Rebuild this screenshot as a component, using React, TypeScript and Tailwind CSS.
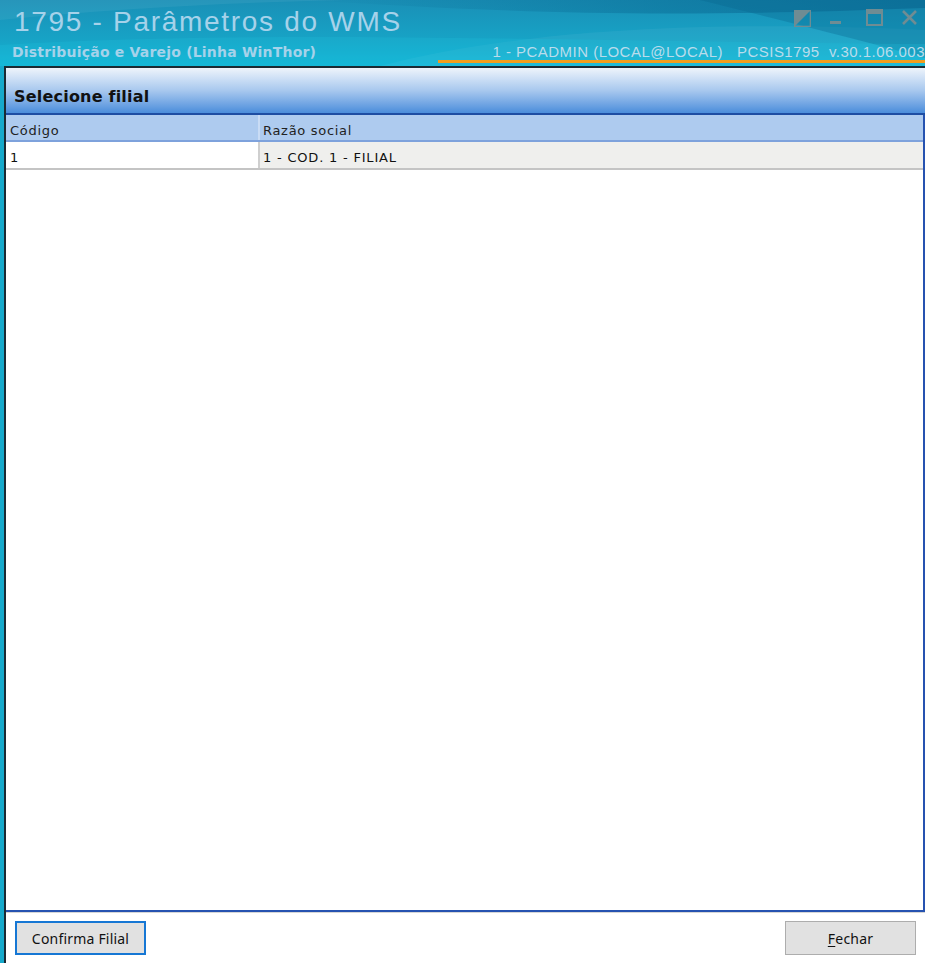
import React from "react";

const sans = { fontFamily: '"Liberation Sans", Arial, sans-serif' };
const tahoma = { fontFamily: '"DejaVu Sans", Verdana, sans-serif' };
const segoe = { fontFamily: '"Noto Sans", "Open Sans", sans-serif' };

function HeaderArt() {
  return (
    <svg className="absolute inset-0 h-full w-full" viewBox="0 0 925 66" preserveAspectRatio="none">
      <defs>
        <linearGradient id="hdrBase" x1="0" y1="0" x2="0" y2="1">
          <stop offset="0" stopColor="#1a8fb6" />
          <stop offset="0.6" stopColor="#17a3c6" />
          <stop offset="1" stopColor="#12b6d6" />
        </linearGradient>
        <linearGradient id="hdrDark" x1="0" y1="0" x2="1" y2="0">
          <stop offset="0" stopColor="#0b6f98" stopOpacity="0" />
          <stop offset="0.6" stopColor="#0b6f98" stopOpacity="0.55" />
          <stop offset="1" stopColor="#0a6a94" stopOpacity="0.7" />
        </linearGradient>
      </defs>
      <rect width="925" height="66" fill="url(#hdrBase)" />
      <path d="M300 0 C 480 10, 620 20, 925 8 L925 0 Z" fill="url(#hdrDark)" />
      <path d="M0 20 C 200 0, 420 -4, 600 0 L0 0 Z" fill="#ffffff" fillOpacity="0.06" />
      <path d="M380 66 C 520 30, 700 20, 925 30 L925 66 Z" fill="#ffffff" fillOpacity="0.05" />
      <path d="M700 0 C 780 20, 860 40, 925 58 L925 0 Z" fill="#0a6690" fillOpacity="0.35" />
      <path d="M0 45 C 250 30, 500 40, 925 44 L925 66 L0 66 Z" fill="#20c0dc" fillOpacity="0.25" />
    </svg>
  );
}

function WindowButtons() {
  const c = "#6f8c93";
  return (
    <div className="flex items-start gap-[18px] pt-[9px] pr-[7px]">
      <svg width="17" height="17" viewBox="0 0 17 17" className="mt-[1px]">
        <rect x="0.5" y="0.5" width="16" height="16" fill="none" stroke={c} strokeWidth="1.6" />
        <path d="M1 1 H16 L1 16 Z" fill={c} />
      </svg>
      <svg width="14" height="17" viewBox="0 0 14 17">
        <rect x="1" y="12" width="11" height="3" fill={c} />
      </svg>
      <svg width="17" height="17" viewBox="0 0 17 17" className="ml-[5px]">
        <rect x="1" y="1" width="15" height="15" fill="none" stroke={c} strokeWidth="2" />
        <rect x="1" y="1" width="15" height="4" fill={c} />
      </svg>
      <svg width="17" height="17" viewBox="0 0 17 17">
        <path d="M2 2 L15 15 M15 2 L2 15" stroke={c} strokeWidth="2.6" />
      </svg>
    </div>
  );
}

export default function App() {
  return (
    <div className="relative flex h-[963px] w-[925px] flex-col overflow-hidden bg-[#16a9cb]">
      {/* title bar */}
      <div className="relative h-[66px] shrink-0">
        <HeaderArt />
        <div className="absolute left-[438px] right-0 top-[60px] h-[3px] bg-[#f29d1c]" />
        <div className="relative flex items-start justify-between">
          <div
            className="pl-[14px] pt-[6px] text-[28px] leading-[32px] tracking-[1.7px] text-[#a6d2ea]"
            style={sans}
          >
            1795 - Parâmetros do WMS
          </div>
          <WindowButtons />
        </div>
        <div className="relative mt-[6px] flex items-end justify-between whitespace-nowrap">
          <div className="pl-[12px] text-[14px] font-bold leading-[16px] tracking-[0.2px] text-[#a6d2ea]" style={tahoma}>
            Distribuição e Varejo (Linha WinThor)
          </div>
          <div className="text-[15px] leading-[16px] tracking-[0.48px] text-[#b9dcec]" style={sans}>
            1 - PCADMIN (LOCAL@LOCAL)&nbsp;&nbsp;&nbsp;PCSIS1795&nbsp;&nbsp;v.30.1.06.003
          </div>
        </div>
      </div>

      {/* client area */}
      <div className="ml-[4px] flex flex-1 flex-col border-l-2 border-t-2 border-[#1b2a33] bg-white">
        <div className="flex h-[47px] shrink-0 items-center border-b-2 border-[#1d4da3] bg-gradient-to-b from-[#eef4fb] via-[#a8c8ee] to-[#4a8ddb] pl-[8px] pt-[12px]">
          <span className="text-[16px] font-bold tracking-[0.2px] text-[#111]" style={tahoma}>
            Selecione filial
          </span>
        </div>

        {/* grid */}
        <div className="flex flex-1 flex-col border-b-2 border-r-2 border-[#2652b0] bg-white" style={tahoma}>
          <div className="flex h-[27px] shrink-0 items-center border-b-2 border-[#7ea2dc] bg-[#aecbef] text-[13px] tracking-[0.7px] text-[#222]">
            <div className="flex h-full w-[254px] items-center border-r-2 border-[#c9dcf5] pl-[4px] pt-[6px]">Código</div>
            <div className="flex h-full flex-1 items-center pl-[3px] pt-[6px]">Razão social</div>
          </div>
          <div className="flex h-[28px] shrink-0 items-center border-b-2 border-[#c4c4c4] text-[13px] tracking-[0.8px] text-[#111]">
            <div className="flex h-full w-[254px] items-center border-r-2 border-[#cfcfcf] bg-white pl-[4px] pt-[5px]">1</div>
            <div className="flex h-full flex-1 items-center bg-[#efefed] pl-[3px] pt-[5px]">1 - COD. 1 - FILIAL</div>
          </div>
          <div className="flex-1" />
        </div>

        {/* toolbar */}
        <div className="flex h-[51px] shrink-0 items-start justify-between border-t border-[#d6d6d6] bg-white pl-[9px] pr-[9px] pt-[8px]" style={segoe}>
          <button className="h-[34px] w-[131px] border-2 border-[#1677d4] bg-[#e1e1e1] text-[14px] tracking-[0.2px] text-[#111]">
            Confirma Filial
          </button>
          <button className="h-[34px] w-[131px] border border-[#adadad] bg-[#e1e1e1] text-[14px] tracking-[0.2px] text-[#111]">
            <span className="underline underline-offset-2">F</span>echar
          </button>
        </div>
      </div>
    </div>
  );
}
